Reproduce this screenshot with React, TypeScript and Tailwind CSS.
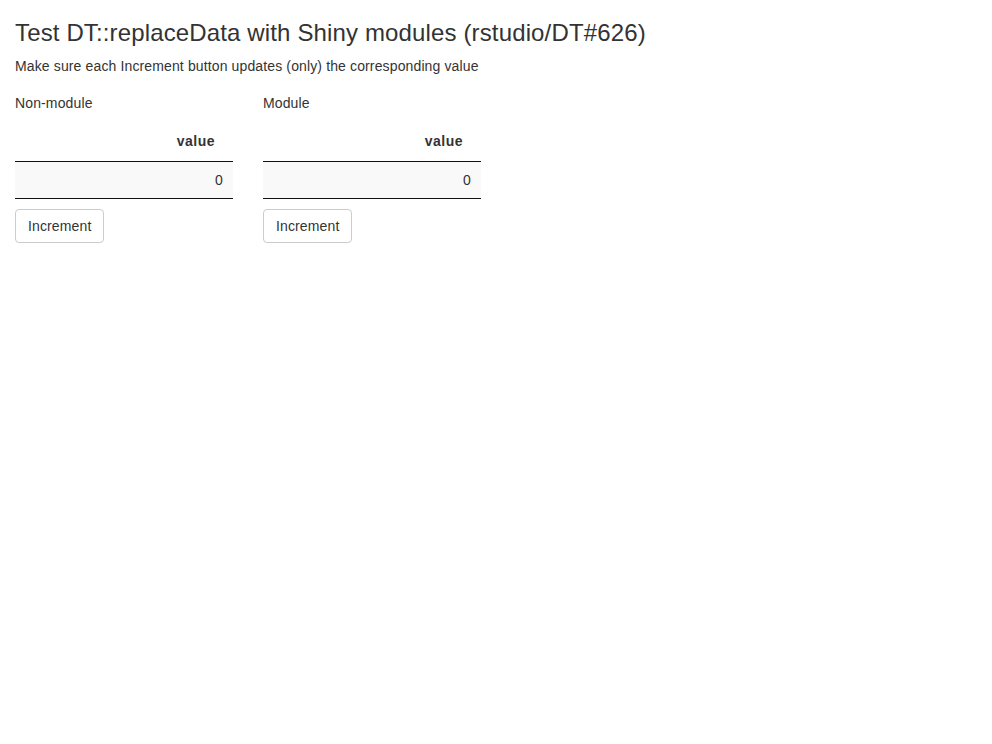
import React from "react";

function Panel({ label }: { label: string }) {
  return (
    <div className="w-[248px] px-[15px]">
      <div className="mt-[7px] h-[20px] leading-[20px]">{label}</div>
      <table className="mt-[8px] w-full border-collapse">
        <thead>
          <tr>
            <th className="border-b border-[#111] pt-[10px] pb-[10px] pl-[10px] pr-[18px] text-right font-bold leading-[20px] tracking-[0.5px]">value</th>
          </tr>
        </thead>
        <tbody>
          <tr className="bg-[#f9f9f9]">
            <td className="border-b border-[#111] px-[10px] py-[8px] text-right leading-[20px]">0</td>
          </tr>
        </tbody>
      </table>
      <button className="mt-[10px] h-[34px] rounded-[4px] border border-[#ccc] bg-white px-[12px] leading-[20px] text-[#333]">
        Increment
      </button>
    </div>
  );
}

export default function App() {
  return (
    <div className="min-h-[744px] bg-white px-[15px] text-[14px] leading-[20px] tracking-[0.13px] text-[#333]" style={{ fontFamily: '"Liberation Sans", Arial, sans-serif' }}>
      <h2 className="pt-[20px] mb-[10px] text-[24px] leading-[26px] font-normal tracking-[0.14px]">
        Test DT::replaceData with Shiny modules (rstudio/DT#626)
      </h2>
      <p className="mb-[10px]">Make sure each Increment button updates (only) the corresponding value</p>
      <div className="-mx-[15px] flex">
        <Panel label="Non-module" />
        <Panel label="Module" />
      </div>
    </div>
  );
}
